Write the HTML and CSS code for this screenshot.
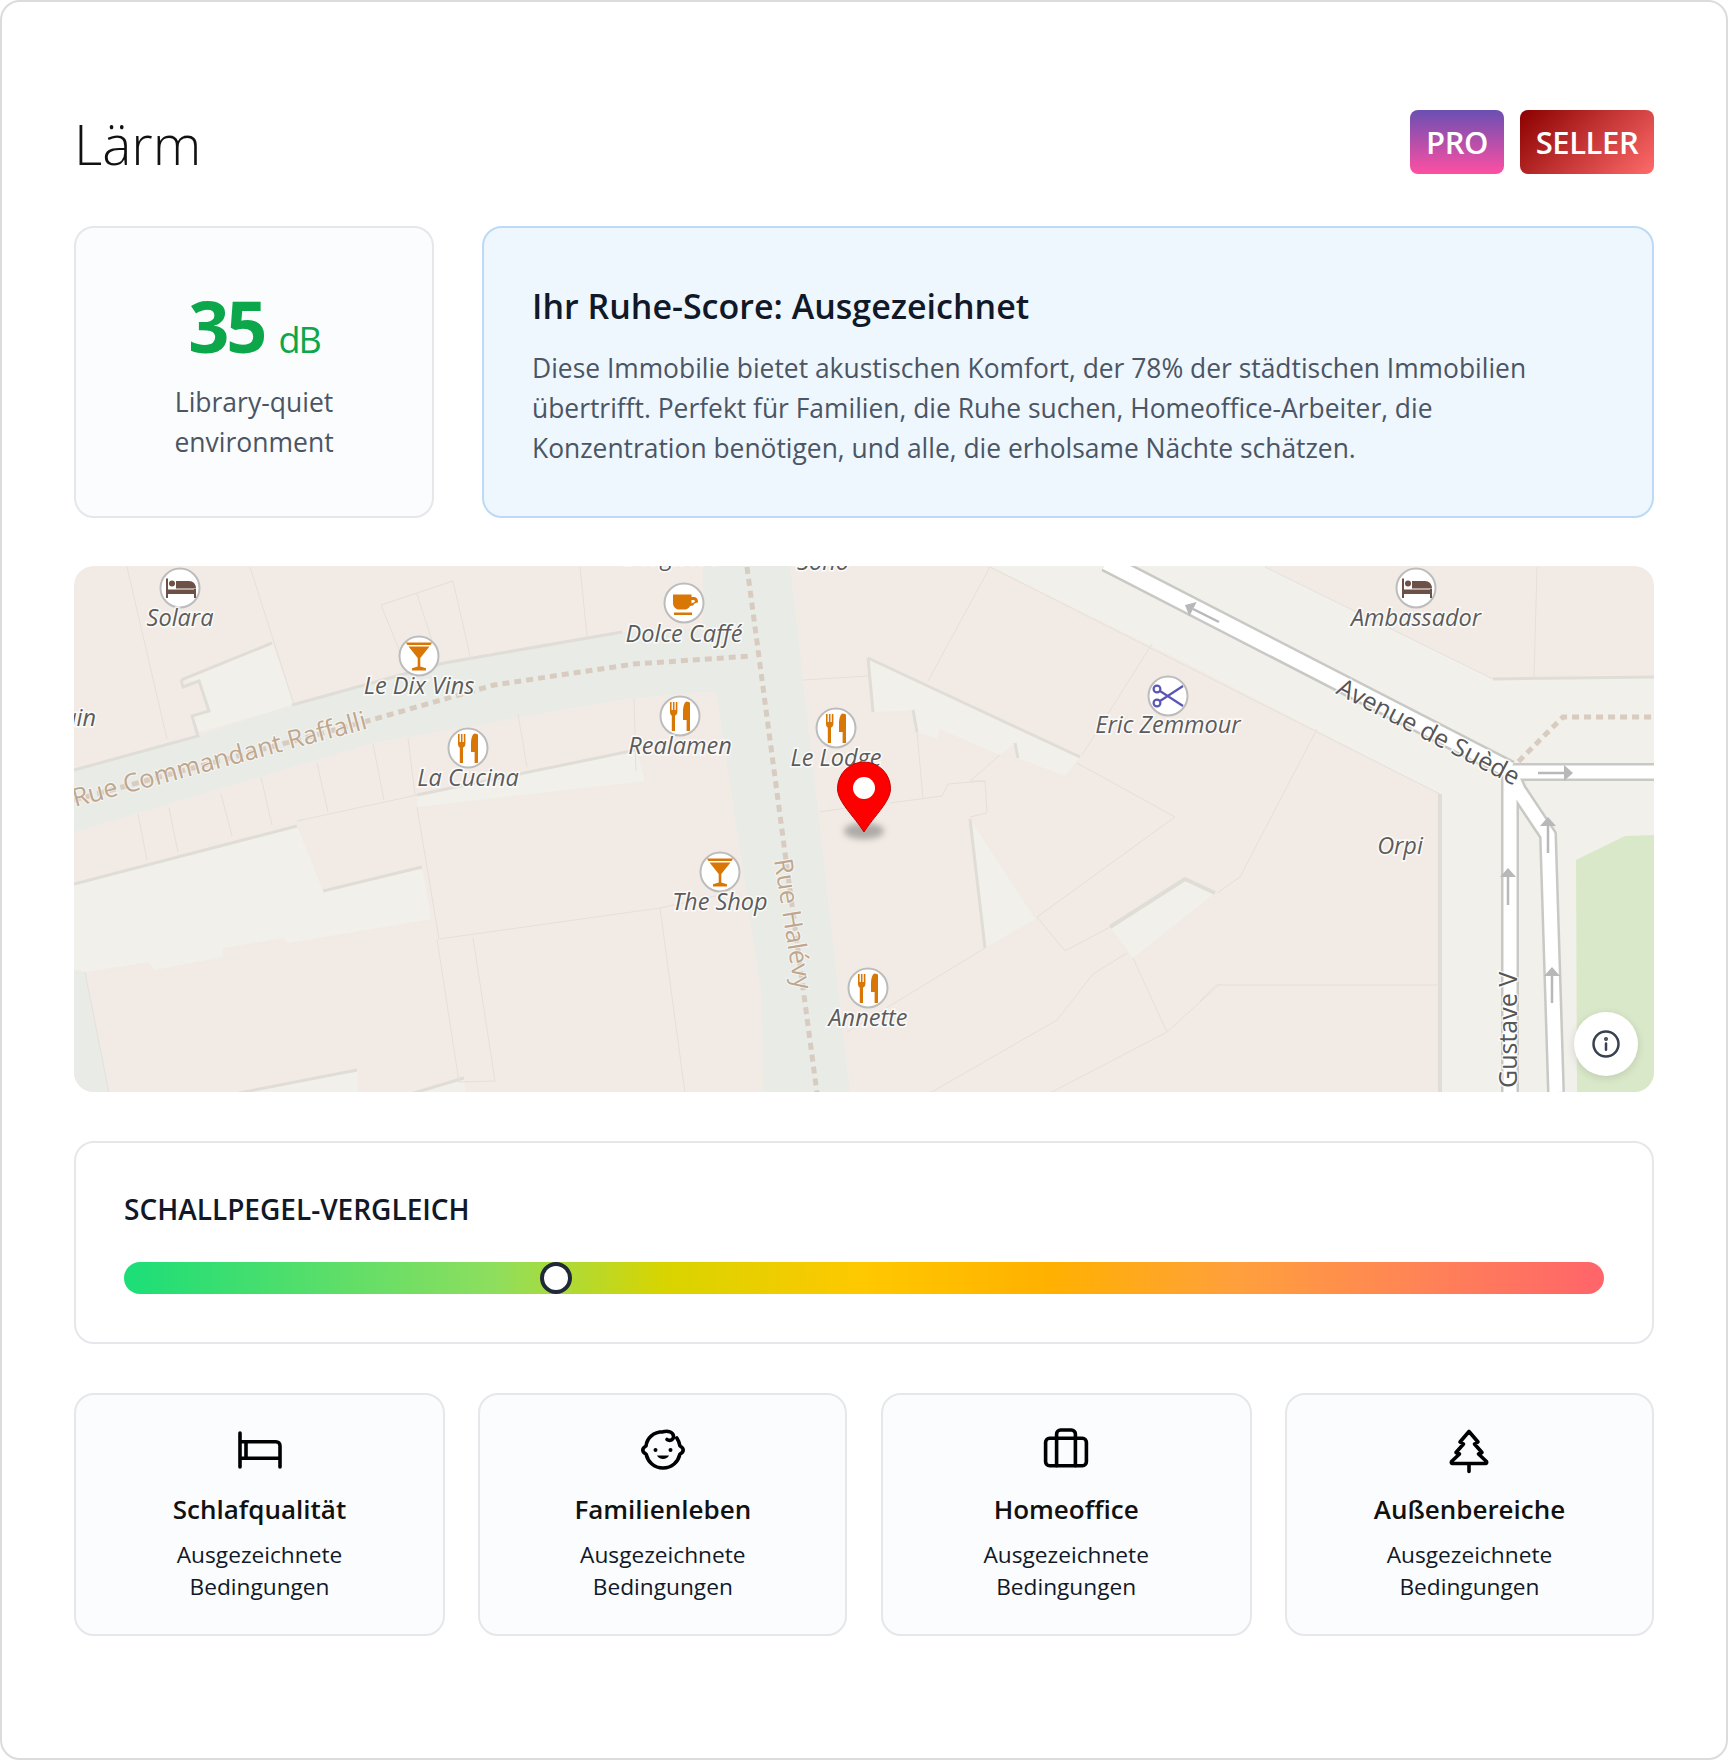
FILE: index.html
```html
<!DOCTYPE html>
<html lang="de">
  <head>
    <meta charset="UTF-8" />
    <meta name="viewport" content="width=device-width, initial-scale=1.0" />
    <title>Lärm</title>
    <link rel="stylesheet" href="styles.css">
  </head>
  <body>
    <div class="page">
      <header class="page-header">
        <h1>Lärm</h1>
        <div class="badges">
          <span class="badge badge-pro">PRO</span>
          <span class="badge badge-seller">SELLER</span>
        </div>
      </header>

      <div class="summary">
        <div class="stat-card">
          <div class="stat-value">35<span class="stat-unit">dB</span></div>
          <p>Library-quiet<br />environment</p>
        </div>
        <div class="info-card">
          <h3>Ihr Ruhe-Score: Ausgezeichnet</h3>
          <p>Diese Immobilie bietet akustischen Komfort, der 78% der städtischen Immobilien übertrifft. Perfekt für Familien, die Ruhe suchen, Homeoffice-Arbeiter, die Konzentration benötigen, und alle, die erholsame Nächte schätzen.</p>
        </div>
      </div>

      <div class="map">
        <svg class="map-canvas" viewBox="0 0 1580 526" width="1580" height="526">
          <defs>
            <g id="m-fork" class="ico-orange">
              <path d="M-10-14h1.6v8h1.3v-8h1.6v8h1.3v-8H-2.6v10c0 2-1.4 3.2-2.4 3.6V15h-3.2V-.4C-9-.8-10-2-10-4z" />
              <path d="M6.5-14.5c2 0 3.5.8 3.5 1.5V15H6.6V4H3V-4C3-9 4-13.5 6.5-14.5z" />
            </g>
            <g id="m-glass" class="ico-orange">
              <path d="M-13-13.5H13L11.6-11H-11.6z" />
              <path d="M-10.5-9.5H10.500L1.300 2V10.500L7 12.200V14.500H-7V12.200L-1.300 10.500V2z" />
            </g>
            <g id="m-cup" class="ico-orange">
              <path d="M-11-8.500H7.500V-6H9c3.500 0 5 2 5 4.500S12-2 9 2.500L6 3C5 5 3 6.500 1 6.500H-5C-8 6.500-11 4-11 0zM7.500-3V.3C10-.2 11-1 11-2S10-3 7.500-3z" fill-rule="evenodd" />
              <rect x="-10" y="9.500" width="18" height="2.500" />
            </g>
            <g id="m-bed" class="ico-brown">
              <rect x="-14" y="-9.500" width="2" height="19.500" />
              <rect x="14" y="1" width="2" height="9" />
              <rect x="-12" y="1.500" width="28" height="4.500" />
              <circle cx="-8" cy="-4.500" r="3" />
              <path d="M-4 .5V-7H9c4 0 7 3 7 7.500z" />
            </g>
            <g id="m-scissors" class="ico-scissors">
              <circle cx="-11" cy="-7" r="3.400" />
              <circle cx="-11" cy="7" r="3.400" />
              <path d="M-8-5L15 10M-8 5L15-10" />
            </g>
            <path id="arrow-head" d="M0 0L8 9H-8z" />
          </defs>

          <rect class="ground" width="1580" height="526" />

          <!-- left block courtyards -->
          <path class="yard" d="M107 114L198 77 220 139 125 166 118 150 135 145 125 115z" />
          <path class="yard" d="M-1 318L223 260 249 325 348 301 357 353 214 377 209 372 149 382 149 391 80 404 75 396 11 406 0 410z" />
          <path class="yard" d="M343 229L562 184 571 215 343 241z" />
          <path class="yard" d="M165 527L283 504 284 527z" />
          <path class="yard" d="M340 527L390 512 392 527z" />

          <!-- streets -->
          <path class="street" d="M0 204L124 170 218 139 370 97 548 66 629 62V0H716L776 527H689L687 425 642 125 557 132 299 177 0 266z" />
          <path class="street" d="M0 404L11 406 35 527H0z" />

          <path class="edge" d="M0 318L223 260M249 325L348 301M107 114L198 77M107 114L109 121 125 115 135 145 118 150 124 170 0 204M218 139L370 97 548 66M343 229L562 184M165 527L283 504M340 527L390 512" />

          <path class="wall" d="M53 1L93 173M176 1L220 139M307 39L379 15M307 39L328 91M343 28L365 97M379 15L397 94M506 1L513 70M64 248L73 294M95 242L104 286M147 228L158 270M187 211L198 259M243 197L254 246M299 178L310 234M334 172L341 229M444 148L453 201M560 132L562 205M223 255L343 229M343 241L365 373 586 342 611 527M399 372L421 515M363 373L385 516 421 515M586 342L642 330M11 406L35 527" />

          <!-- right plaza -->
          <path class="yard" d="M916 0H1191L1419 113 1580 111V526H1366V228L1126 104z" />
          <path class="yard" d="M794 92L1006 191 991 210 944 192 941 177 926 189 866 163 863 173 843 166 839 144 799 146z" />
          <path class="yard" d="M896 253L961 353 911 382z" />
          <path class="yard" d="M1036 361L1111 313 1141 327 1059 392z" />
          <path class="green" d="M1502 294L1551 270 1580 269V526H1503z" />

          <path class="edge" d="M794 92L1006 191M794 92L799 146M839 144L843 166M896 253L911 382M1419 113L1580 111M944 192L941 177" />
          <path class="edge thick" d="M1366 228V526M1036 361L1111 313 1141 327" />

          <path class="wall" d="M729 114L794 110M854 115L916 1M1078 78L1008 189M916 1L1366 228M1191 1L1419 113M1003 197L1101 251 963 351 991 385 1036 361M911 382L773 466M1059 392L1093 466 976 527M1053 387L1019 408 983 454 856 527M1093 466L1146 418M1126 435L1142 419H1366M1243 163L1166 311 1143 327M896 215H911L913 247 896 251M816 237L868 230 874 218 911 215M843 166L849 232M746 246L779 241M896 215L926 189M1463 1L1460 111" />

          <!-- footpaths -->
          <path class="footpath" d="M0 234L290 156 420 119 560 98 678 90M673 1L743 527" />
          <path class="footpath" d="M1436 204L1489 151H1580" />

          <!-- roads with casing -->
          <path class="road-case wide" d="M1032-4L1436 204" />
          <path class="road-case" d="M1436 204V526M1436 206H1580M1444 224L1474 269 1482 526M1436 206L1444 224" />
          <path class="road-fill wide" d="M1032-4L1436 204" />
          <path class="road-fill" d="M1436 204V526M1436 206H1580M1444 224L1474 269 1482 526M1436 206L1444 224" />

          <!-- one way arrows -->
          <path class="oneway" d="M1464 207H1491M1434 311V339M1474 259V287M1478 409V437M1119 43L1145 56" />
          <use href="#arrow-head" class="arrowhead" transform="translate(1499 207) rotate(90)" />
          <use href="#arrow-head" class="arrowhead" transform="translate(1434 302)" />
          <use href="#arrow-head" class="arrowhead" transform="translate(1474 251)" />
          <use href="#arrow-head" class="arrowhead" transform="translate(1478 401)" />
          <use href="#arrow-head" class="arrowhead" transform="translate(1111 39) rotate(-63)" />

          <!-- street names -->
          <text class="street-name" transform="translate(1 241) rotate(-15)">Rue Commandant Raffalli</text>
          <text class="street-name" transform="translate(700 294) rotate(81)">Rue Halévy</text>
          <text class="road-name" transform="translate(1261 127) rotate(27.400)">Avenue de Suède</text>
          <text class="road-name" transform="translate(1443 522) rotate(-90)">Gustave V</text>

          <!-- places -->
          <text class="poi-label" x="598" y="-1">Borghese</text>
          <text class="poi-label" x="749" y="4">Soho</text>
          <text class="poi-label end" x="22" y="160">Main</text>

          <circle class="poi" cx="106" cy="22" r="19.500" /><use href="#m-bed" x="106" y="22" />
          <text class="poi-label" x="106" y="60">Solara</text>

          <circle class="poi" cx="345" cy="90" r="19.500" /><use href="#m-glass" x="345" y="90" />
          <text class="poi-label" x="345" y="128">Le Dix Vins</text>

          <circle class="poi" cx="610" cy="37" r="19.500" /><use href="#m-cup" x="610" y="37" />
          <text class="poi-label" x="610" y="76">Dolce Caffé</text>

          <circle class="poi" cx="394" cy="182" r="19.500" /><use href="#m-fork" x="394" y="182" />
          <text class="poi-label" x="394" y="220">La Cucina</text>

          <circle class="poi" cx="606" cy="150" r="19.500" /><use href="#m-fork" x="606" y="150" />
          <text class="poi-label" x="606" y="188">Realamen</text>

          <circle class="poi" cx="646" cy="306" r="19.500" /><use href="#m-glass" x="646" y="306" />
          <text class="poi-label" x="646" y="344">The Shop</text>

          <circle class="poi" cx="762" cy="162" r="19.500" /><use href="#m-fork" x="762" y="162" />
          <text class="poi-label" x="762" y="200">Le Lodge</text>

          <circle class="poi" cx="794" cy="422" r="19.500" /><use href="#m-fork" x="794" y="422" />
          <text class="poi-label" x="794" y="460">Annette</text>

          <circle class="poi" cx="1094" cy="130" r="19.500" /><use href="#m-scissors" x="1094" y="130" />
          <text class="poi-label" x="1094" y="167">Eric Zemmour</text>

          <circle class="poi" cx="1342" cy="22" r="19.500" /><use href="#m-bed" x="1342" y="22" />
          <text class="poi-label" x="1342" y="60">Ambassador</text>

          <text class="poi-label" x="1326" y="288">Orpi</text>

          <!-- location pin -->
          <ellipse class="pin-shadow" cx="790" cy="265" rx="20" ry="8" />
          <path class="pin" d="M790 266C780 250 763.500 236 763.500 222.500A26.500 26.500 0 0 1 816.500 222.500C816.500 236 800 250 790 266z" />
          <circle class="pin-dot" cx="790" cy="222" r="11" />
        </svg>
        <button class="map-info" aria-label="Info">
          <svg viewBox="0 0 24 24" width="30" height="30"><circle cx="12" cy="12" r="10" /><path d="M12 16.500v-5" /><circle class="dot" cx="12" cy="8" r=".6" /></svg>
        </button>
      </div>

      <section class="compare">
        <h4>Schallpegel-Vergleich</h4>
        <div class="meter">
          <span class="meter-knob" style="left: 29.17%"></span>
        </div>
      </section>

      <div class="features">
        <div class="feature">
          <svg class="feature-icon" viewBox="0 0 48 48">
            <path d="M4 7V41M4 15.700H40a4 4 0 0 1 4 4V41M4 32.300H44M10 15.700V32.300" />
          </svg>
          <h5>Schlafqualität</h5>
          <p>Ausgezeichnete<br />Bedingungen</p>
        </div>
        <div class="feature">
          <svg class="feature-icon" viewBox="0 0 48 48">
            <path d="M24 5.800C14.500 5.800 8 12 7 20 5 21 3.800 22.500 3.800 24S5 27 7 28C9 36 15 42 24 42S39 36 41 28C43 27 44.200 25.500 44.200 24S43 21 41 20C40.500 17 39.500 14.500 37.800 12M24 5.800C29 4.500 34 6 34.500 10 35 13.500 31 15.500 28 13.500" />
            <path class="fill" d="M18 29.500C20 34 28 34 30 29.500z" />
            <circle class="fill" cx="16.500" cy="24" r="2" />
            <circle class="fill" cx="31.500" cy="24" r="2" />
          </svg>
          <h5>Familienleben</h5>
          <p>Ausgezeichnete<br />Bedingungen</p>
        </div>
        <div class="feature">
          <svg class="feature-icon" viewBox="0 0 48 48">
            <rect x="3.600" y="12.300" width="40.800" height="27.400" rx="4" />
            <path d="M14.600 39.700V8a4 4 0 0 1 4-4H29.400a4 4 0 0 1 4 4V39.700" />
          </svg>
          <h5>Homeoffice</h5>
          <p>Ausgezeichnete<br />Bedingungen</p>
        </div>
        <div class="feature">
          <svg class="feature-icon" viewBox="0 0 48 48">
            <path d="M24 5.500L33 16 29.500 18 37 26.500 33.500 28 41.500 35.500C42 36.500 41.500 37.500 40.500 37.500H7.500C6.500 37.500 6 36.500 6.500 35.500L14.500 28 11 26.500 18.500 18 15 16zM24 37.500V45.500" />
          </svg>
          <h5>Außenbereiche</h5>
          <p>Ausgezeichnete<br />Bedingungen</p>
        </div>
      </div>
    </div>
  </body>
</html>
```
FILE: styles.css
```css
* {
  box-sizing: border-box;
}

body {
  margin: 0;
  background-color: #fff;
  font-family: "Open Sans", "Noto Sans", sans-serif;
  color: #111827;
}

.page {
  min-height: 1760px;
  padding: 108px 72px 72px;
  border: 2px solid #dcdcdc;
  border-radius: 20px;
}

.page-header {
  display: flex;
  justify-content: space-between;
  align-items: center;
  height: 64px;
  margin-bottom: 52px;
}

.page-header h1 {
  margin: 0;
  padding-top: 2px;
  font-size: 55px;
  font-weight: 300;
  color: #111;
}

.badges {
  display: flex;
  gap: 16px;
}

.badge {
  display: flex;
  align-items: center;
  justify-content: center;
  height: 64px;
  border-radius: 8px;
  color: #fff;
  font-size: 31px;
  font-weight: 600;
  letter-spacing: -0.4px;
}

.badge-pro {
  width: 94px;
  background: linear-gradient(180deg, #6a4fb3, #ff4fa3);
}

.badge-seller {
  width: 134px;
  background: linear-gradient(135deg, #8b0000, #ff6b6b);
}

.summary {
  display: flex;
  gap: 48px;
  margin-bottom: 48px;
}

.stat-card {
  flex: 0 0 360px;
  height: 292px;
  padding-top: 58px;
  border: 2px solid #e5e7eb;
  border-radius: 20px;
  background-color: #fafcfe;
  text-align: center;
}

.stat-value {
  color: #0ca74a;
  font-size: 72px;
  font-weight: 700;
  line-height: 78px;
  letter-spacing: -3px;
}

.stat-unit {
  margin-left: 14px;
  font-size: 36px;
  font-weight: 400;
  letter-spacing: -2px;
}

.stat-card p {
  margin: 3px 0 0;
  color: #4b5563;
  font-size: 26.500px;
  line-height: 40px;
}

.info-card {
  flex: 1;
  height: 292px;
  padding: 54px 48px 0;
  border: 2px solid #bcdaf6;
  border-radius: 20px;
  background-color: #eef6fe;
}

.info-card h3 {
  margin: 0 0 18px;
  color: #111827;
  font-size: 34px;
  font-weight: 600;
  line-height: 48px;
}

.info-card p {
  margin: 0;
  color: #4b5563;
  font-size: 26.400px;
  line-height: 40px;
}

.map {
  position: relative;
  height: 526px;
  margin-bottom: 49px;
  border-radius: 20px;
  overflow: hidden;
}

.map-canvas {
  display: block;
}

.ground { fill: #f2ebe5; }
.yard { fill: #f1f0ea; }
.street { fill: #e9ebe6; }
.green { fill: #d9e8c8; }
.edge { fill: none; stroke: #e0ddd7; stroke-width: 3; }
.edge.thick { stroke-width: 4; }
.wall { fill: none; stroke: #e5dfd9; stroke-width: 1; }
.footpath { fill: none; stroke: #d8ccc0; stroke-width: 5; stroke-dasharray: 7 5; }
.road-case { fill: none; stroke: #c8c8c5; stroke-width: 18; }
.road-fill { fill: none; stroke: #fff; stroke-width: 13; }
.road-case.wide { stroke-width: 20; }
.road-fill.wide { stroke-width: 15; }
.oneway { fill: none; stroke: #b8b8b8; stroke-width: 2.5; }
.arrowhead { fill: #b8b8b8; }

.street-name {
  fill: #bfa78f;
  font-size: 25.600px;
  paint-order: stroke;
  stroke: rgba(255, 255, 255, 0.6);
  stroke-width: 2px;
}

.road-name {
  fill: #565656;
  font-size: 25px;
  paint-order: stroke;
  stroke: rgba(255, 255, 255, 0.8);
  stroke-width: 3px;
}

.poi { fill: #fff; stroke: #bcbcbc; stroke-width: 2; }

.poi-label {
  fill: #5c5c5c;
  font-size: 23.500px;
  font-style: italic;
  text-anchor: middle;
  paint-order: stroke;
  stroke: rgba(255, 255, 255, 0.8);
  stroke-width: 3px;
}

.poi-label.end { text-anchor: end; }

.ico-orange { fill: #d97706; }
.ico-brown { fill: #6d5046; }
.ico-scissors { fill: none; stroke: #5a57b4; stroke-width: 2.2; }

.pin { fill: #f00; stroke: #c40000; stroke-width: 1; }
.pin-dot { fill: #fff; }
.pin-shadow { fill: rgba(90, 90, 90, 0.45); filter: blur(3px); }

.map-info {
  position: absolute;
  right: 16px;
  bottom: 16px;
  display: flex;
  align-items: center;
  justify-content: center;
  width: 64px;
  height: 64px;
  padding: 0;
  border: none;
  border-radius: 50%;
  background-color: #fff;
  box-shadow: 0 2px 8px rgba(0, 0, 0, 0.12);
}

.map-info svg {
  fill: none;
  stroke: #374151;
  stroke-width: 2;
  stroke-linecap: round;
}

.map-info .dot { fill: #374151; }

.compare {
  height: 203px;
  padding: 47px 48px 0;
  margin-bottom: 49px;
  border: 2px solid #e5e7eb;
  border-radius: 20px;
  background-color: #fff;
}

.compare h4 {
  margin: 0 0 33px;
  color: #111827;
  font-size: 28px;
  font-weight: 600;
  line-height: 39px;
  text-transform: uppercase;
}

.meter {
  position: relative;
  height: 32px;
  border-radius: 16px;
  background: linear-gradient(90deg, #1bde78 0%, #8ede5e 25%, #d8d400 36.500%, #ffc800 50%, #ffb100 62.500%, #ffa03c 75%, #ff8555 87%, #ff646a 100%);
}

.meter-knob {
  position: absolute;
  top: 0;
  width: 32px;
  height: 32px;
  margin-left: -16px;
  border: 4px solid #1f2937;
  border-radius: 50%;
  background-color: #fff;
}

.features {
  display: grid;
  grid-template-columns: 371fr 369fr 371fr 369fr;
  gap: 33.300px;
}

.feature {
  height: 243px;
  padding-top: 31px;
  border: 2px solid #e5e7eb;
  border-radius: 20px;
  background-color: #fafcfe;
  text-align: center;
}

.feature-icon {
  display: block;
  width: 48px;
  height: 48px;
  margin: 0 auto 15px;
  fill: none;
  stroke: #000;
  stroke-width: 3.600;
  stroke-linecap: round;
  stroke-linejoin: round;
}

.feature-icon .fill {
  fill: #000;
  stroke: none;
}

.feature h5 {
  margin: 0 0 10px;
  color: #111;
  font-size: 26px;
  font-weight: 600;
  line-height: 40px;
}

.feature p {
  margin: 0;
  color: #111827;
  font-size: 22.700px;
  line-height: 32px;
}
```
